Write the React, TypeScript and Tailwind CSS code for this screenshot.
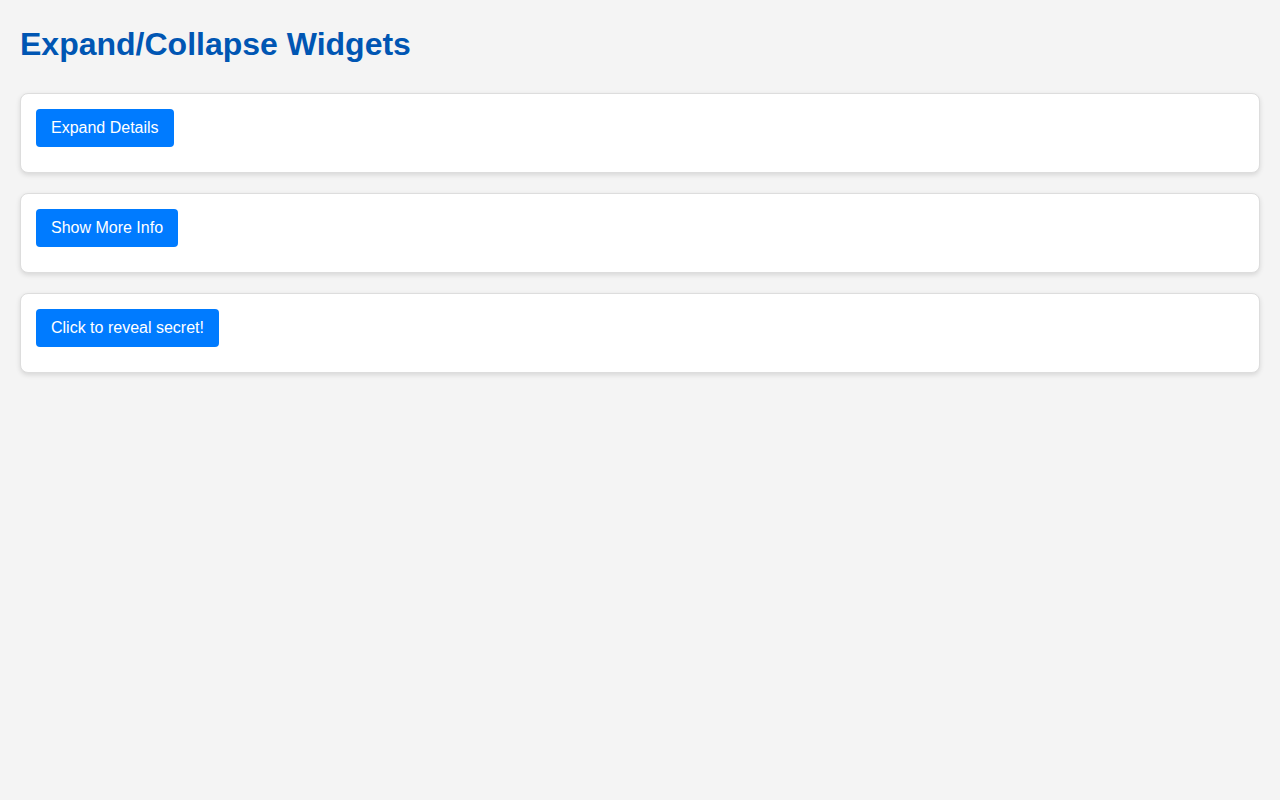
import React, { useState } from "react";

const widgets = [
	{ label: "Expand Details", content: "Here are some additional details about this widget." },
	{ label: "Show More Info", content: "More information is shown here once expanded." },
	{ label: "Click to reveal secret!", content: "The secret is: you found it!" },
];

const Widget: React.FC<{ label: string; content: string }> = ({ label, content }) => {
	const [open, setOpen] = useState(false);

	return (
		<div className="bg-white border border-[#dddddd] rounded-lg shadow-[0_2px_5px_rgba(0,0,0,0.12)] p-[15px] pb-[25px]">
			<button
				onClick={() => setOpen(!open)}
				className="bg-[#007bff] text-white text-[16px] leading-[18px] px-[15px] py-[10px] rounded-[4px] cursor-pointer"
			>
				{label}
			</button>
			{open && <div className="mt-[10px] text-[#333333]">{content}</div>}
		</div>
	);
};

export default function App() {
	return (
		<div
			className="min-h-screen bg-[#f4f4f4] p-5"
			style={{ fontFamily: '"Liberation Sans", Arial, sans-serif' }}
		>
			<h1 className="mt-[6px] mb-[30px] text-[32px] leading-[37px] font-bold text-[#0056b3]">
				Expand/Collapse Widgets
			</h1>
			<div className="flex flex-col gap-5">
				{widgets.map((w) => (
					<Widget key={w.label} label={w.label} content={w.content} />
				))}
			</div>
		</div>
	);
}
